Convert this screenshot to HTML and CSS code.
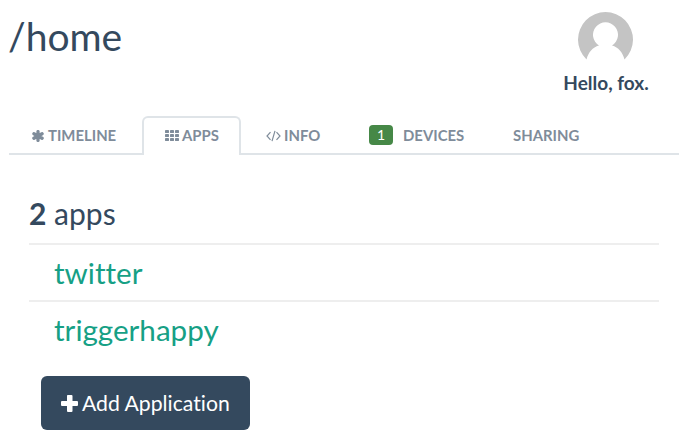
FILE: index.html
```html
<!DOCTYPE html>
<html lang="en">
<head>
<meta charset="utf-8">
<title>/home</title>
<link rel="stylesheet" href="styles.css">
</head>
<body>
<header class="header">
  <h1 class="title">/home</h1>
  <div class="user">
    <svg class="avatar" viewBox="0 0 56 56"><path d="M8.500 47.500A27.500 27.500 0 1 1 46.500 47.500C44.500 40 40.500 35.500 34 33.500A12.500 12.500 0 1 0 21 33.500C14.500 35.500 10.500 40 8.500 47.500Z" fill="#c4c4c4"/></svg>
    <div class="greeting">Hello, fox.</div>
  </div>
</header>
<nav class="tabs">
  <a class="tab timeline"><svg class="icon star" viewBox="0 0 12 12"><path d="M6 1.600V10.400M1.900 3.700L10.100 8.300M10.100 3.700L1.900 8.300" stroke="currentColor" stroke-width="3.300" stroke-linecap="round"/></svg>TIMELINE</a>
  <a class="tab active"><svg class="icon grid" viewBox="0 0 14 11"><g fill="currentColor"><rect width="4" height="3" rx=".4"/><rect x="5" width="4" height="3" rx=".4"/><rect x="10" width="4" height="3" rx=".4"/><rect y="4" width="4" height="3" rx=".4"/><rect x="5" y="4" width="4" height="3" rx=".4"/><rect x="10" y="4" width="4" height="3" rx=".4"/><rect y="8" width="4" height="3" rx=".4"/><rect x="5" y="8" width="4" height="3" rx=".4"/><rect x="10" y="8" width="4" height="3" rx=".4"/></g></svg>APPS</a>
  <a class="tab info"><svg class="icon code" viewBox="0 0 15 12"><path d="M4.500 2.200L1 6L4.500 9.800M10.500 2.200L14 6L10.500 9.800M9 .8L6 11.200" fill="none" stroke="currentColor" stroke-width="1.200"/></svg>INFO</a>
  <a class="tab devices"><span class="badge">1</span>DEVICES</a>
  <a class="tab sharing">SHARING</a>
</nav>
<main class="content">
  <h2 class="row count"><b>2</b> apps</h2>
  <div class="row app"><a>twitter</a></div>
  <div class="row app"><a>triggerhappy</a></div>
  <button class="add"><svg class="plus" viewBox="0 0 17 17"><path d="M6.500 0h4a1 1 0 0 1 1 1v4.900H16a1 1 0 0 1 1 1v3.200a1 1 0 0 1-1 1h-4.500V16a1 1 0 0 1-1 1h-3.500a1 1 0 0 1-1-1v-4.900H1a1 1 0 0 1-1-1V6.900a1 1 0 0 1 1-1h5V1a1 1 0 0 1 .5-1z" fill="#fff"/></svg>Add Application</button>
</main>
</body>
</html>
```
FILE: styles.css
```css
* { box-sizing: border-box; }
body { margin: 0; padding: 0 12px 0 9px; background: #fff; color: #34495e; font-family: Lato, sans-serif; font-variant-ligatures: none; height: 440px; overflow: hidden; }
.header { display: flex; justify-content: space-between; height: 116px; }
.title { margin: 11px 0 0 -1px; font-size: 39px; line-height: 50px; font-weight: 400; }
.user { width: 146px; padding-top: 12px; display: flex; flex-direction: column; align-items: center; }
.avatar { width: 56px; height: 56px; display: block; }
.greeting { margin-top: 3px; font-size: 19px; line-height: 24px; font-weight: 700; white-space: nowrap; }
.tabs { display: flex; height: 39px; color: #7f8c9a; font-size: 14.9px; font-weight: 700; background: linear-gradient(#dfe4e8, #dfe4e8) left bottom / 100% 2px no-repeat; }
.tab { display: flex; align-items: center; height: 39px; padding-bottom: 1px; white-space: nowrap; line-height: 20px; }
.timeline { width: 133px; padding-left: 23px; }
.active { width: 99px; padding: 0 0 3px 21px; border: 2px solid #dfe4e8; border-bottom: 0; border-radius: 6px 6px 0 0; background: #fff; }
.info { width: 128px; padding-left: 25px; }
.devices { width: 144px; }
.icon { display: block; flex: none; position: relative; top: 1px; }
.star { width: 12px; height: 12px; margin-right: 4px; }
.grid { width: 14px; height: 11px; margin-right: 3px; top: 0; }
.code { width: 15px; height: 12px; margin-right: 3px; }
.badge { width: 24px; height: 20px; border-radius: 4px; background: #468847; color: #fff; font-size: 14px; font-weight: 400; text-align: center; margin-right: 10px; }
.content { padding: 30px 20px 0; }
.row { margin: 0; font-size: 29.6px; font-weight: 400; line-height: 40px; }
.count { height: 58px; padding-top: 8px; font-size: 30px; }
.count b { font-weight: 700; }
.app { height: 57px; padding: 8px 0 0 25px; border-top: 2px solid #eee; color: #16a085; }
.add { display: flex; align-items: center; width: 209px; height: 54px; margin: 19px 0 0 12px; padding: 0 0 0 20px; border: 0; border-radius: 6px; background: #34495e; color: #fff; font: 400 21.2px/30px Lato, sans-serif; font-variant-ligatures: none; white-space: nowrap; }
.plus { width: 17px; height: 17px; margin-right: 4px; }
```
